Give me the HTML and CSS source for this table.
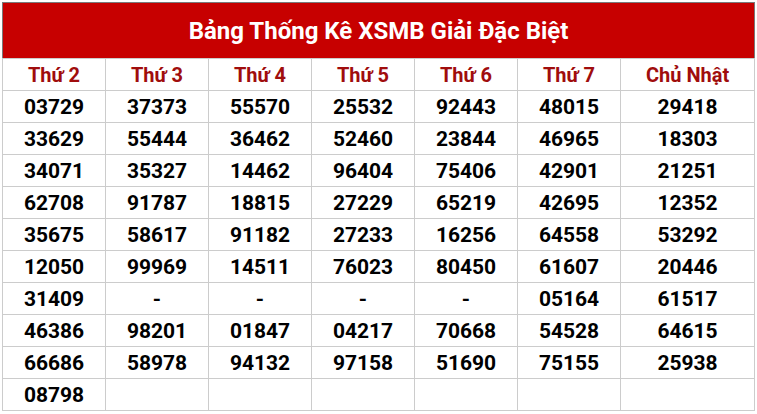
FILE: index.html
```html
<!DOCTYPE html>
<html lang="vi">
<head>
<meta charset="utf-8">
<title>Bảng Thống Kê XSMB Giải Đặc Biệt</title>
<link rel="stylesheet" href="styles.css">
</head>
<body>
<table class="stats">
  <colgroup>
    <col class="c-day"><col class="c-day"><col class="c-day"><col class="c-day"><col class="c-day"><col class="c-day"><col class="c-sun">
  </colgroup>
  <thead>
    <tr><th class="title" colspan="7">Bảng Thống Kê XSMB Giải Đặc Biệt</th></tr>
    <tr class="days">
      <th>Thứ 2</th><th>Thứ 3</th><th>Thứ 4</th><th>Thứ 5</th><th>Thứ 6</th><th>Thứ 7</th><th>Chủ Nhật</th>
    </tr>
  </thead>
  <tbody>
    <tr><td>03729</td><td>37373</td><td>55570</td><td>25532</td><td>92443</td><td>48015</td><td>29418</td></tr>
    <tr><td>33629</td><td>55444</td><td>36462</td><td>52460</td><td>23844</td><td>46965</td><td>18303</td></tr>
    <tr><td>34071</td><td>35327</td><td>14462</td><td>96404</td><td>75406</td><td>42901</td><td>21251</td></tr>
    <tr><td>62708</td><td>91787</td><td>18815</td><td>27229</td><td>65219</td><td>42695</td><td>12352</td></tr>
    <tr><td>35675</td><td>58617</td><td>91182</td><td>27233</td><td>16256</td><td>64558</td><td>53292</td></tr>
    <tr><td>12050</td><td>99969</td><td>14511</td><td>76023</td><td>80450</td><td>61607</td><td>20446</td></tr>
    <tr><td>31409</td><td>-</td><td>-</td><td>-</td><td>-</td><td>05164</td><td>61517</td></tr>
    <tr><td>46386</td><td>98201</td><td>01847</td><td>04217</td><td>70668</td><td>54528</td><td>64615</td></tr>
    <tr><td>66686</td><td>58978</td><td>94132</td><td>97158</td><td>51690</td><td>75155</td><td>25938</td></tr>
    <tr><td>08798</td><td></td><td></td><td></td><td></td><td></td><td></td></tr>
  </tbody>
</table>
</body>
</html>
```

FILE: styles.css
```css
html, body {
  margin: 0;
  padding: 0;
  background: #ffffff;
}

body {
  padding: 2px 0 0 2px;
  font-family: Roboto, "Liberation Sans", Arial, sans-serif;
}

.stats {
  border-collapse: collapse;
  table-layout: fixed;
  width: 752px;
  border: 1px solid #7a7a7a;
}

.c-day { width: 103px; }
.c-sun { width: 134px; }

.stats th,
.stats td {
  border: 1px solid #cccccc;
  padding: 0;
  text-align: center;
  height: 31px;
}

.stats .title {
  background: #c70000;
  color: #ffffff;
  font-size: 24px;
  font-weight: 700;
  height: 55px;
  border: 1px solid #7a7a7a;
  border-bottom: 1px solid #cccccc;
}

.days th {
  color: #a00d0d;
  font-size: 20px;
  font-weight: 700;
}

.stats td {
  color: #000000;
  font-size: 21px;
  font-weight: 700;
}
```
